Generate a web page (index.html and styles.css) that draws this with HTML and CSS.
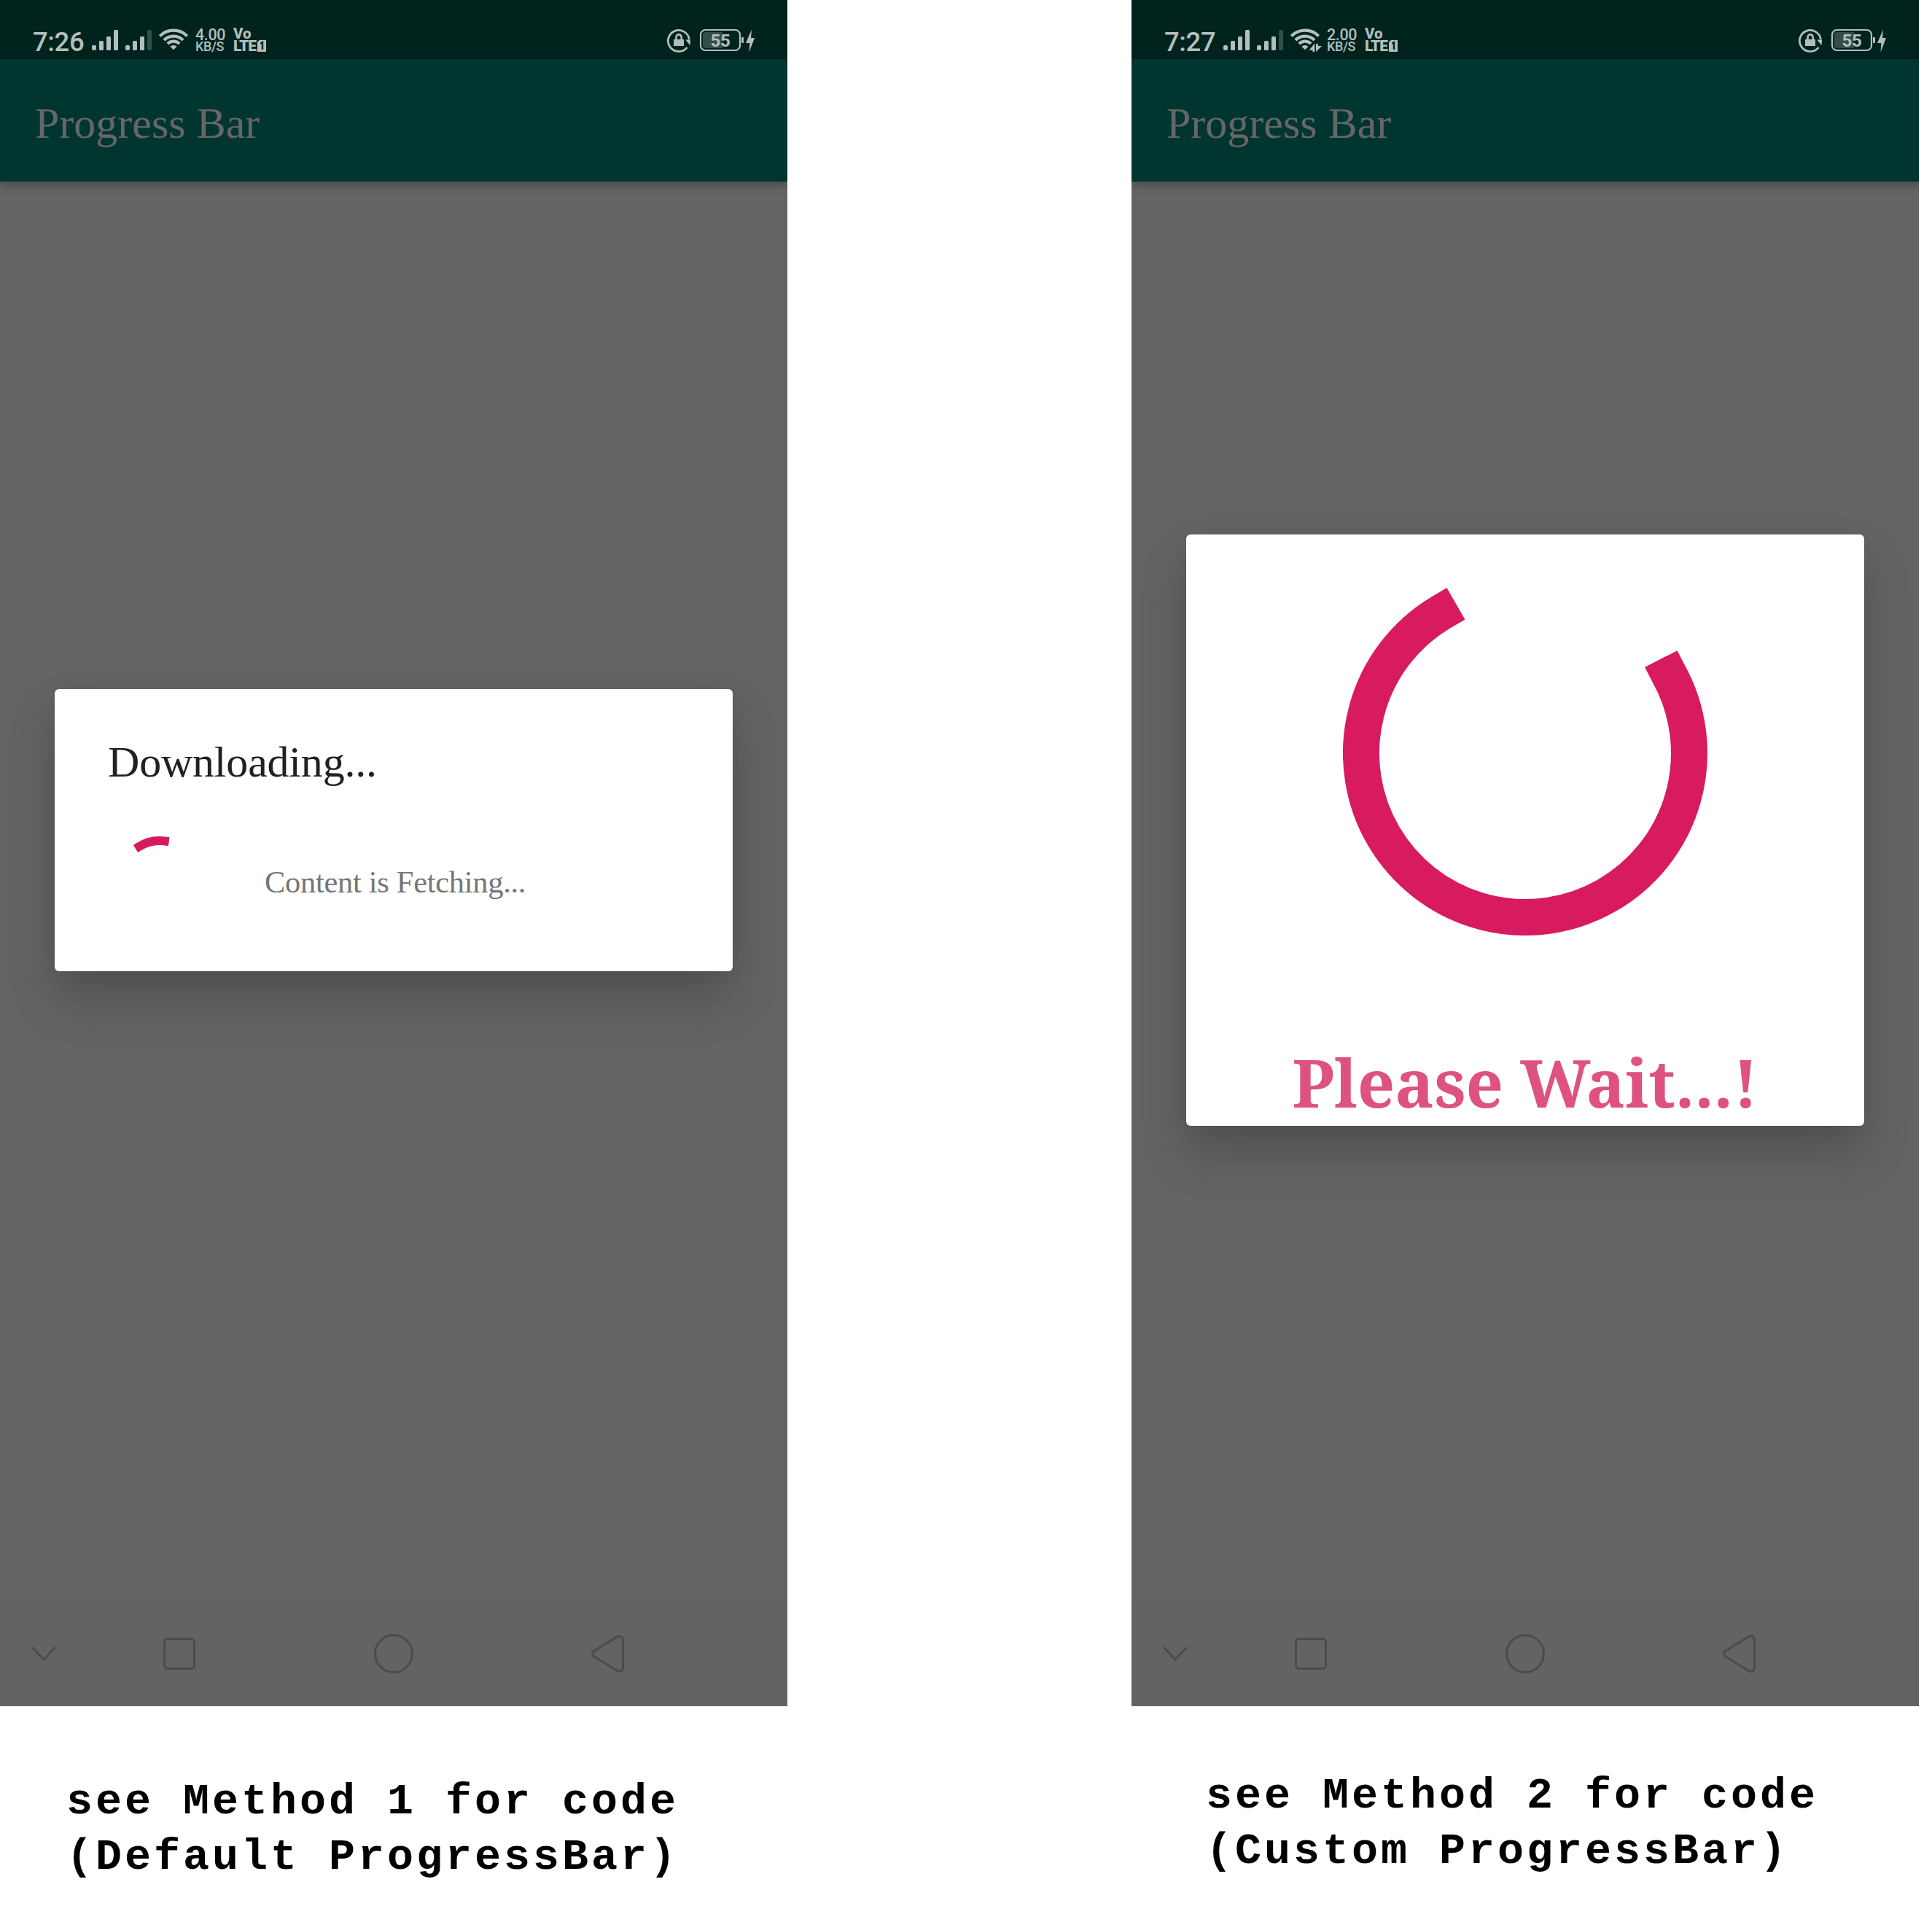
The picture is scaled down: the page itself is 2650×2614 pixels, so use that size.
FILE: index.html
```html
<!DOCTYPE html>
<html lang="en">
<head>
<meta charset="utf-8">
<title>Progress Bar</title>
<link rel="stylesheet" href="styles.css">
</head>
<body>
<svg class="defs" width="0" height="0" aria-hidden="true">
  <symbol id="signal" viewBox="126 36 82 40">
    <rect x="126" y="62" width="6" height="7" rx="2"/><rect x="136" y="56" width="6" height="13" rx="1.5"/><rect x="146" y="50" width="6" height="19" rx="1.5"/><rect x="156" y="41" width="6" height="28" rx="1.5"/>
    <rect x="172" y="62" width="6" height="7" rx="2"/><rect x="182" y="56" width="6" height="13" rx="1.5"/><rect x="192" y="50" width="6" height="19" rx="1.5"/><rect x="202" y="41" width="6" height="28" rx="1.5" opacity=".28"/>
  </symbol>
  <symbol id="wifi" viewBox="216 36 46 40">
    <g fill="none" stroke="currentColor" stroke-width="4.2">
      <path d="M219.3 49.5A26.3 26.3 0 0 1 256.7 49.5"/><path d="M224.9 55A18.6 18.6 0 0 1 251.1 55"/><path d="M229.9 60A11.5 11.5 0 0 1 246.1 60"/>
    </g>
    <path d="M238 68.3L233.4 64A6.3 6.3 0 0 1 242.6 64Z"/>
  </symbol>
  <symbol id="lock" viewBox="914 36 34 40">
    <path d="M945.4 54A14.6 14.6 0 1 0 942.5 65" fill="none" stroke="currentColor" stroke-width="2.8"/>
    <path d="M940.3 54.5H947V56L946.5 62.3Z"/>
    <path d="M924 54H938V63H924Z"/><path d="M927.5 55V51A3.6 3.6 0 0 1 934.7 51V55" fill="none" stroke="currentColor" stroke-width="2.6"/>
  </symbol>
  <symbol id="battery" viewBox="959 36 77 40">
    <path d="M968 44H991V66H968A4 4 0 0 1 964 62V48A4 4 0 0 1 968 44Z" opacity=".28"/>
    <rect x="961" y="41" width="54" height="28" rx="6.5" fill="none" stroke="currentColor" stroke-width="2.2"/>
    <rect x="1017" y="51" width="3" height="8" rx="1"/>
    <path d="M1031 40.5L1023 59H1028.4L1027.5 71.5L1035 52H1030Z"/>
  </symbol>
  <symbol id="one-badge" viewBox="0 0 12 16">
    <path d="M3 0H12V16H0V3Z"/>
    <path d="M4.3 4.8L7 3.2V13" fill="none" stroke="#00231e" stroke-width="2.4"/>
  </symbol>
  <symbol id="nav-down" viewBox="0 0 34 20"><path d="M2 2L17 18L32 2" fill="none" stroke="currentColor" stroke-width="3" stroke-linecap="round"/></symbol>
  <symbol id="nav-square" viewBox="0 0 44 44"><rect x="1.5" y="1.5" width="41" height="41" rx="4.5" fill="none" stroke="currentColor" stroke-width="3"/></symbol>
  <symbol id="nav-circle" viewBox="0 0 54 54"><circle cx="27" cy="27" r="25.5" fill="none" stroke="currentColor" stroke-width="3"/></symbol>
  <symbol id="nav-back" viewBox="0 0 45 52"><path d="M4.3 21.8L35.6 2.6Q39 .8 41.8 3Q43.5 4.6 43.5 7V45Q43.5 47.6 41.8 49.2Q39 51.2 35.6 49.4L4.3 30.2Q1.5 28.4 1.5 26Q1.5 23.6 4.3 21.8Z" fill="none" stroke="currentColor" stroke-width="3"/></symbol>
</svg>

<main class="board">
  <figure class="shot">
    <div class="phone">
      <header class="status">
        <span class="time">7:26</span>
        <svg class="i-signal"><use href="#signal"/></svg>
        <svg class="i-wifi"><use href="#wifi"/></svg>
        <span class="speed"><span class="rate">4.00</span><span class="unit">KB/S</span></span>
        <span class="volte"><span class="vo">Vo</span><span class="lte">LTE<svg class="i-one"><use href="#one-badge"/></svg></span></span>
        <svg class="i-lock"><use href="#lock"/></svg>
        <span class="battery"><svg class="i-battery"><use href="#battery"/></svg><span class="level">55</span></span>
      </header>
      <div class="appbar">Progress Bar</div>
      <div class="content">
        <section class="dialog dialog-default">
          <h1 class="dialog-title">Downloading...</h1>
          <div class="dialog-body">
            <svg class="spinner-small" viewBox="-72 -72 144 144"><path d="M-33-43L-29.1-45.5A54 54 0 0 1 6.3-53.6L12.7-52.8" fill="none" stroke="#d81b60" stroke-width="12"/></svg>
            <p class="message">Content is Fetching...</p>
          </div>
        </section>
      </div>
      <nav class="navbar">
        <svg class="n-down"><use href="#nav-down"/></svg>
        <svg class="n-square"><use href="#nav-square"/></svg>
        <svg class="n-circle"><use href="#nav-circle"/></svg>
        <svg class="n-back"><use href="#nav-back"/></svg>
      </nav>
    </div>
    <figcaption class="caption caption-first">see Method 1 for code<br>(Default ProgressBar)</figcaption>
  </figure>

  <figure class="shot">
    <div class="phone">
      <header class="status">
        <span class="time">7:27</span>
        <svg class="i-signal"><use href="#signal"/></svg>
        <svg class="i-wifi" viewBox="216 36 46 40">
          <use href="#wifi" x="216" y="36" width="46" height="40"/>
          <path d="M241 69L252 57H263V73H241Z" fill="#00231e"/>
          <path d="M243.7 68.7L251.3 59.3V71H248.4V68.7Z"/><path d="M253 60H255.8V63H261.2L253 71Z"/>
        </svg>
        <span class="speed"><span class="rate">2.00</span><span class="unit">KB/S</span></span>
        <span class="volte"><span class="vo">Vo</span><span class="lte">LTE<svg class="i-one"><use href="#one-badge"/></svg></span></span>
        <svg class="i-lock"><use href="#lock"/></svg>
        <span class="battery"><svg class="i-battery"><use href="#battery"/></svg><span class="level">55</span></span>
      </header>
      <div class="appbar">Progress Bar</div>
      <div class="content">
        <section class="dialog dialog-custom">
          <svg class="spinner-large" viewBox="-250 -250 500 500"><path d="M-95-205L-115.9-192.9A225 225 0 1 0 196.6-109.4L186.3-129.4" fill="none" stroke="#d81b60" stroke-width="50"/></svg>
          <p class="wait">Please Wait...!</p>
        </section>
      </div>
      <nav class="navbar">
        <svg class="n-down"><use href="#nav-down"/></svg>
        <svg class="n-square"><use href="#nav-square"/></svg>
        <svg class="n-circle"><use href="#nav-circle"/></svg>
        <svg class="n-back"><use href="#nav-back"/></svg>
      </nav>
    </div>
    <figcaption class="caption caption-second">see Method 2 for code<br>(Custom ProgressBar)</figcaption>
  </figure>
</main>
</body>
</html>
```
FILE: styles.css
```css
* { box-sizing: border-box; margin: 0; padding: 0; }
body { background: #fff; width: 2650px; height: 2614px; overflow: hidden; }
.defs { display: block; width: 0; height: 0; }
svg { display: block; flex: none; fill: currentColor; }

.board { display: flex; gap: 472px; }
.shot { width: 1080px; flex: none; }
.phone { display: flex; flex-direction: column; height: 2340px; background: #646464; overflow: hidden; }

.status { display: flex; flex: none; height: 81px; padding: 36px 44px 0 45px; background: #00231e; color: #b2bfbd; font-family: Roboto, sans-serif; }
.status svg { height: 40px; }
.time { width: 81px; padding-top: 2px; font-size: 36.5px; font-weight: 500; line-height: 40px; letter-spacing: -.4px; }
.i-signal { width: 82px; margin-right: 8px; }
.i-wifi { width: 46px; margin-right: 6px; }
.speed { display: flex; flex-direction: column; width: 52px; white-space: nowrap; }
.rate { font-size: 21.5px; font-weight: 500; line-height: 24px; height: 18px; letter-spacing: -.4px; }
.unit { font-size: 18px; font-weight: 500; line-height: 20px; letter-spacing: -.4px; }
.volte { display: flex; flex-direction: column; margin-right: auto; font-weight: 900; white-space: nowrap; }
.vo { height: 17px; font-size: 20.5px; font-weight: 800; line-height: 20px; }
.lte { display: flex; font-size: 21px; line-height: 20px; letter-spacing: -1.2px; }
.status .i-one { width: 12px; height: 16px; margin: 2px 0 0 2.5px; }
.i-lock { width: 34px; margin-right: 11px; }
.battery { position: relative; }
.i-battery { width: 77px; }
.level { position: absolute; left: 15.5px; top: 6px; font-size: 24px; font-weight: 700; line-height: 28px; letter-spacing: -.2px; }

.appbar { height: 168px; flex: none; padding-left: 48px; background: #003530; color: #666; font: 60px/176px "Baskerville", "Liberation Serif", serif; box-shadow: 0 3px 12px rgba(0, 0, 0, .35); z-index: 1; }

.content { flex: 1; display: flex; align-items: center; justify-content: center; padding-bottom: 168px; }
.dialog { width: 930px; background: #fff; border-radius: 6px; box-shadow: 0 38px 66px rgba(0, 0, 0, .2), 0 0 24px rgba(0, 0, 0, .05); }
.dialog-default { height: 387px; padding: 65px 72px 0; }
.dialog-title { padding-left: 1px; font: 400 60px/70px "Baskerville", "Liberation Serif", serif; letter-spacing: -.2px; color: #212121; }
.dialog-body { display: flex; align-items: center; gap: 72px; padding-top: 55px; }
.spinner-small { width: 144px; height: 144px; }
.message { padding-top: 5px; font: 42.5px/50px "Baskerville", "Liberation Serif", serif; letter-spacing: -.3px; color: #757575; white-space: nowrap; }
.dialog-custom { display: flex; flex-direction: column; align-items: center; height: 811px; padding-top: 50px; }
.spinner-large { width: 500px; height: 500px; }
.wait { margin-top: 149px; font: 700 90px/104px "Noto Serif", "Droid Serif", "DejaVu Serif Condensed", "DejaVu Serif", serif; font-stretch: condensed; color: #de527f; white-space: nowrap; }

.navbar { display: flex; align-items: center; flex: none; height: 144px; padding-left: 43px; background: #636363; color: #4b4b4b; }
.n-down { width: 34px; height: 20px; margin-right: 147px; }
.n-square { width: 44px; height: 44px; margin-right: 245px; }
.n-circle { width: 54px; height: 54px; margin-right: 244px; }
.n-back { width: 45px; height: 52px; }

.caption { font: 700 60px/76px "Courier New", "Liberation Mono", monospace; letter-spacing: 4px; color: #000; white-space: nowrap; }
.caption-first { padding: 93px 0 0 91px; }
.caption-second { padding: 85px 0 0 102px; }
```
